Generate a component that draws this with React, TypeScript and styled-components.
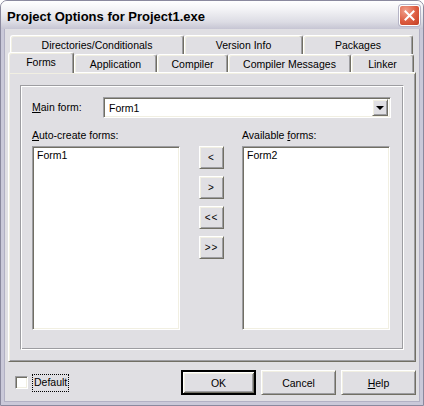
import React from 'react';
import styled, { createGlobalStyle } from 'styled-components';

const FACE = '#E0DFE3';
const LIGHT = '#F1EFE2';
const SHADOW = '#9D9DA1';
const DARK = '#716F64';

const GlobalStyle = createGlobalStyle`
  html, body {
    margin: 0;
    padding: 0;
    background: #ffffff;
  }
  body {
    font-family: 'Liberation Sans', Arial, sans-serif;
    font-size: 10.5px;
    color: #000;
  }
`;

const Window = styled.div`
  box-sizing: border-box;
  width: 424px;
  height: 406px;
  display: flex;
  flex-direction: column;
  border: 1px solid #8a899e;
  border-radius: 7px 7px 0 0;
  overflow: hidden;
  background: ${FACE};
`;

const TitleBar = styled.div`
  box-sizing: border-box;
  height: 28px;
  flex: none;
  display: flex;
  align-items: center;
  justify-content: space-between;
  padding: 0 3px 0 6px;
  background: linear-gradient(to bottom, #ffffff 0%, #f3f3f6 30%, #dcdce4 75%, #c6c5d3 100%);
`;

const Title = styled.div`
  font-family: 'Liberation Sans', Arial, sans-serif;
  font-weight: bold;
  font-size: 13px;
  color: #000;
  padding-top: 2px;
`;

const CloseButton = styled.div`
  box-sizing: border-box;
  width: 21px;
  height: 21px;
  border-radius: 3px;
  border: 1px solid #ffffff;
  box-shadow: 0 0 0 1px #b5b4c6;
  background: radial-gradient(circle at 30% 25%, #f0a08c 0%, #dd5c40 55%, #c23d22 100%);
  display: flex;
  align-items: center;
  justify-content: center;
  margin-top: 1px;
`;

const Frame = styled.div`
  flex: 1;
  display: flex;
  flex-direction: column;
  border: 3px solid #cac9d9;
  border-top: none;
  box-shadow: inset 1px 0 0 #b2b1c4, inset -1px 0 0 #b2b1c4, inset 0 -1px 0 #b2b1c4;
  padding: 6px 4px 0 4px;
`;

const TabControl = styled.div`
  width: 408px;
  display: flex;
  flex-direction: column;
`;

const TabRow = styled.div<{ $indent: number; $height: number }>`
  display: flex;
  align-items: flex-end;
  height: ${p => p.$height}px;
  padding-left: ${p => p.$indent}px;
`;

const Tab = styled.div<{ $w: number; $active?: boolean; $h: number }>`
  box-sizing: border-box;
  position: relative;
  z-index: ${p => (p.$active ? 2 : 1)};
  top: ${p => (p.$active ? 1 : 0)}px;
  width: ${p => p.$w}px;
  height: ${p => p.$h}px;
  flex: none;
  border-top: 1px solid #ffffff;
  border-left: 1px solid #ffffff;
  border-right: 1px solid ${DARK};
  border-radius: 3px 3px 0 0;
  box-shadow: inset -1px 0 0 ${SHADOW}, inset 1px 1px 0 ${LIGHT};
  background: ${FACE};
  display: flex;
  align-items: center;
  justify-content: center;
  padding-bottom: ${p => (p.$active ? 2 : 0)}px;
`;

const TabPage = styled.div`
  box-sizing: border-box;
  height: 290px;
  border: 1px solid;
  border-color: #ffffff ${DARK} ${DARK} #ffffff;
  box-shadow: inset 1px 1px 0 ${LIGHT}, inset -1px -1px 0 ${SHADOW};
  padding: 12px 11px 11px 11px;
  display: flex;
`;

const Bevel = styled.div`
  box-sizing: border-box;
  flex: 1;
  border: 1px solid;
  border-color: ${SHADOW} #ffffff #ffffff ${SHADOW};
  box-shadow: inset 1px 1px 0 #ffffff, inset -1px -1px 0 ${SHADOW};
  padding: 11px 10px 0 11px;
`;

const MainRow = styled.div`
  display: flex;
  align-items: center;
  height: 21px;
`;

const Label = styled.div<{ $w?: number }>`
  width: ${p => (p.$w ? `${p.$w}px` : 'auto')};
  line-height: 13px;
  white-space: nowrap;
`;

const Sunken = styled.div`
  box-sizing: border-box;
  border: 1px solid;
  border-color: ${SHADOW} #ffffff #ffffff ${SHADOW};
  box-shadow: inset 1px 1px 0 ${DARK}, inset -1px -1px 0 ${LIGHT};
  background: #ffffff;
`;

const Combo = styled(Sunken)`
  width: 288px;
  height: 21px;
  display: flex;
  align-items: center;
  justify-content: space-between;
  padding: 2px 2px 2px 5px;
`;

const Raised = styled.div`
  box-sizing: border-box;
  background: ${FACE};
  border: 1px solid;
  border-color: #ffffff ${DARK} ${DARK} #ffffff;
  box-shadow: inset 1px 1px 0 ${LIGHT}, inset -1px -1px 0 ${SHADOW};
  display: flex;
  align-items: center;
  justify-content: center;
`;

const DropButton = styled(Raised)`
  width: 16px;
  height: 17px;
`;

const Arrow = styled.div`
  width: 0;
  height: 0;
  border-left: 4px solid transparent;
  border-right: 4px solid transparent;
  border-top: 4px solid #000;
  margin-top: 1px;
`;

const Lists = styled.div`
  display: grid;
  grid-template-columns: 148px 62px 148px;
  grid-template-rows: 13px 184px;
  row-gap: 4px;
  margin-top: 11px;
`;

const ListBox = styled(Sunken)`
  padding: 2px 4px;
  line-height: 13px;
`;

const MoveButtons = styled.div`
  display: flex;
  flex-direction: column;
  align-items: center;
  gap: 7px;
`;

const MoveButton = styled(Raised)`
  width: 25px;
  height: 23px;
  font-size: 10px;
  letter-spacing: 1px;
  padding-left: 1px;
`;

const Bottom = styled.div`
  display: flex;
  align-items: center;
  height: 25px;
  margin-top: 8px;
  padding: 0 0 0 7px;
`;

const CheckBox = styled(Sunken)`
  width: 13px;
  height: 13px;
  flex: none;
`;

const FocusLabel = styled.div`
  margin-left: 4px;
  padding: 1px 1px 2px 1px;
  line-height: 13px;
  border: 1px dotted #000;
`;

const Spacer = styled.div`
  flex: 1;
`;

const Button = styled(Raised)<{ $default?: boolean }>`
  width: 75px;
  height: 25px;
  margin-left: 5px;
  font-size: 10.5px;
  ${p =>
    p.$default
      ? `border-width: 2px; border-color: #000; box-shadow: inset 1px 1px 0 #ffffff, inset -1px -1px 0 ${DARK}, inset 2px 2px 0 ${LIGHT}, inset -2px -2px 0 ${SHADOW};`
      : ''}
`;

const rowOne = [
  { label: 'Directories/Conditionals', w: 174 },
  { label: 'Version Info', w: 119 },
  { label: 'Packages', w: 110 },
];

const rowTwo = [
  { label: 'Forms', w: 66, active: true },
  { label: 'Application', w: 83 },
  { label: 'Compiler', w: 71 },
  { label: 'Compiler Messages', w: 123 },
  { label: 'Linker', w: 63 },
];

const App = () => {
  return (
    <>
      <GlobalStyle />
      <Window>
        <TitleBar>
          <Title>Project Options for Project1.exe</Title>
          <CloseButton>
            <svg width="11" height="11" viewBox="0 0 11 11">
              <path d="M1.5 1.5 L9.5 9.5 M9.5 1.5 L1.5 9.5" stroke="#ffffff" strokeWidth="2" strokeLinecap="square" />
            </svg>
          </CloseButton>
        </TitleBar>
        <Frame>
          <TabControl>
            <TabRow $indent={2} $height={19}>
              {rowOne.map(t => (
                <Tab key={t.label} $w={t.w} $h={19}>
                  {t.label}
                </Tab>
              ))}
            </TabRow>
            <TabRow $indent={0} $height={18}>
              {rowTwo.map(t => (
                <Tab key={t.label} $w={t.w} $h={t.active ? 21 : 18} $active={t.active}>
                  {t.label}
                </Tab>
              ))}
            </TabRow>
            <TabPage>
              <Bevel>
                <MainRow>
                  <Label $w={71}>
                    <u>M</u>ain form:
                  </Label>
                  <Combo>
                    <span>Form1</span>
                    <DropButton>
                      <Arrow />
                    </DropButton>
                  </Combo>
                </MainRow>
                <Lists>
                  <Label>
                    <u>A</u>uto-create forms:
                  </Label>
                  <div />
                  <Label>
                    Available <u>f</u>orms:
                  </Label>
                  <ListBox>Form1</ListBox>
                  <MoveButtons>
                    <MoveButton>&lt;</MoveButton>
                    <MoveButton>&gt;</MoveButton>
                    <MoveButton>&lt;&lt;</MoveButton>
                    <MoveButton>&gt;&gt;</MoveButton>
                  </MoveButtons>
                  <ListBox>Form2</ListBox>
                </Lists>
              </Bevel>
            </TabPage>
          </TabControl>
          <Bottom>
            <CheckBox />
            <FocusLabel>Default</FocusLabel>
            <Spacer />
            <Button $default>OK</Button>
            <Button>Cancel</Button>
            <Button>
              <span>
                <u>H</u>elp
              </span>
            </Button>
          </Bottom>
        </Frame>
      </Window>
    </>
  );
};

export default App;
